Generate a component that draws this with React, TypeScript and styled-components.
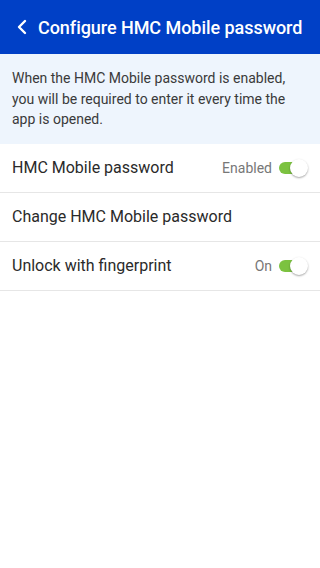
import styled, { createGlobalStyle } from 'styled-components';

const GlobalStyle = createGlobalStyle`
  html, body {
    margin: 0;
    padding: 0;
    background: #fff;
    font-family: Roboto, 'Noto Sans', sans-serif;
  }
`;

type SettingRow = {
  label: string;
  status?: string;
  checked?: boolean;
};

const rows: SettingRow[] = [
  { label: 'HMC Mobile password', status: 'Enabled', checked: true },
  { label: 'Change HMC Mobile password' },
  { label: 'Unlock with fingerprint', status: 'On', checked: true },
];

export default function App() {
  return (
    <>
      <GlobalStyle />
      <Page>
        <Header>
          <BackButton aria-label="Back">
            <svg width="12" height="16" viewBox="0 0 12 16">
              <path d="M9 2 L3 8 L9 14" fill="none" stroke="#fff" strokeWidth="2.4" strokeLinecap="round" strokeLinejoin="round" />
            </svg>
          </BackButton>
          <Title>Configure HMC Mobile password</Title>
        </Header>
        <Info>
          When the HMC Mobile password is enabled, you will be required to enter it every time the app is opened.
        </Info>
        <List>
          {rows.map((row) => (
            <Row key={row.label}>
              <Label>{row.label}</Label>
              {row.status && (
                <Right>
                  <Status>{row.status}</Status>
                  <Toggle checked={!!row.checked}>
                    <Knob checked={!!row.checked} />
                  </Toggle>
                </Right>
              )}
            </Row>
          ))}
        </List>
      </Page>
    </>
  );
}

const Page = styled.div`
  width: 320px;
  min-height: 568px;
  background: #fff;
`;

const Header = styled.header`
  height: 54px;
  background: #0040c6;
  display: flex;
  align-items: center;
  padding: 0 12px 0 13px;
  box-sizing: border-box;
`;

const BackButton = styled.div`
  width: 22px;
  height: 22px;
  display: flex;
  align-items: center;
  justify-content: flex-start;
  padding-left: 3px;
`;

const Title = styled.h1`
  margin: 0;
  color: #fff;
  font-size: 18px;
  font-weight: 500;
  white-space: nowrap;
  letter-spacing: -0.05px;
`;

const Info = styled.div`
  background: #eef5fd;
  color: #3a3a3a;
  font-size: 14px;
  line-height: 20.5px;
  padding: 14px 24px 16px 12px;
  height: 90px;
  box-sizing: border-box;
`;

const List = styled.div`
  display: flex;
  flex-direction: column;
`;

const Row = styled.div`
  height: 49px;
  box-sizing: border-box;
  border-bottom: 1px solid #e6e6e6;
  display: flex;
  align-items: center;
  justify-content: space-between;
  padding: 0 12px;
`;

const Label = styled.span`
  font-size: 16px;
  color: #2a2a2a;
  margin-top: -1px;
`;

const Right = styled.div`
  display: flex;
  align-items: center;
  gap: 7px;
`;

const Status = styled.span`
  font-size: 14px;
  color: #777;
`;

const Toggle = styled.div<{ checked: boolean }>`
  position: relative;
  width: 28px;
  height: 12px;
  margin-right: 1px;
  border-radius: 6px;
  background: ${(p) => (p.checked ? '#7cc240' : '#bbb')};
`;

const Knob = styled.div<{ checked: boolean }>`
  position: absolute;
  top: -3px;
  left: ${(p) => (p.checked ? '11px' : '-2px')};
  width: 18px;
  height: 18px;
  border-radius: 50%;
  background: #fff;
  box-shadow: 0 1px 2px rgba(0, 0, 0, 0.35);
`;
